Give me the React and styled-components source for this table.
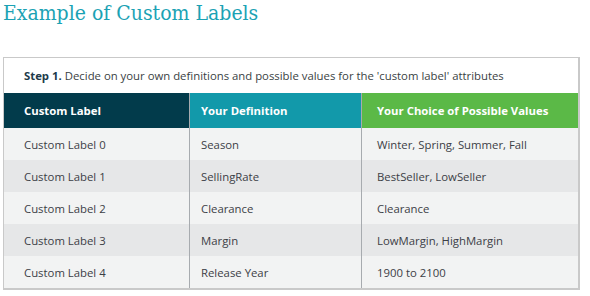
import styled, { createGlobalStyle } from "styled-components";

const rows = [
  { label: "Custom Label 0", def: "Season", values: "Winter, Spring, Summer, Fall" },
  { label: "Custom Label 1", def: "SellingRate", values: "BestSeller, LowSeller" },
  { label: "Custom Label 2", def: "Clearance", values: "Clearance" },
  { label: "Custom Label 3", def: "Margin", values: "LowMargin, HighMargin" },
  { label: "Custom Label 4", def: "Release Year", values: "1900 to 2100" },
];

const GlobalStyle = createGlobalStyle`
  body {
    margin: 0;
    background: #ffffff;
    font-family: "Open Sans", "Liberation Sans", sans-serif;
  }
`;

const Page = styled.div`
  width: 590px;
  height: 296px;
  padding: 0 0 0 3px;
  box-sizing: border-box;
  overflow: hidden;
`;

const Title = styled.h1`
  margin: 0;
  height: 57px;
  padding-top: 1px;
  box-sizing: border-box;
  font-family: "DejaVu Serif Condensed", "DejaVu Serif", "Liberation Serif", serif;
  font-stretch: condensed;
  font-size: 21px;
  font-weight: normal;
  color: #1ba2b4;
`;

const Table = styled.div`
  width: 577px;
  box-sizing: border-box;
  border: 1px solid #c9c9c9;
  border-right-width: 2px;
  border-bottom-width: 2px;
`;

const Step = styled.div`
  height: 35px;
  display: flex;
  align-items: center;
  padding-left: 20px;
  font-size: 11.35px;
  color: #3a3f44;

  b {
    color: #1d3a4a;
    margin-right: 3px;
  }
`;

const Row = styled.div`
  display: grid;
  grid-template-columns: 185px 172px 1fr;
  height: ${(p) => p.$h}px;
  background: ${(p) => p.$bg};
`;

const Cell = styled.div`
  display: flex;
  align-items: center;
  padding-left: ${(p) => p.$pad}px;
  font-size: 11.35px;
  color: #3c4046;
  border-left: ${(p) => (p.$first ? "none" : "1.5px solid #a7abaf")};
`;

const Head = styled(Cell)`
  background: ${(p) => p.$bg};
  color: #ffffff;
  font-weight: 700;
`;

const pads = [20, 11, 15];

export default function App() {
  return (
    <Page>
      <GlobalStyle />
      <Title>Example of Custom Labels</Title>
      <Table>
        <Step>
          <b>Step 1.</b> Decide on your own definitions and possible values for the 'custom label' attributes
        </Step>
        <Row $h={35}>
          <Head $first $pad={pads[0]} $bg="#023b4b">Custom Label</Head>
          <Head $pad={pads[1]} $bg="#1299aa">Your Definition</Head>
          <Head $pad={pads[2]} $bg="#5bb947">Your Choice of Possible Values</Head>
        </Row>
        {rows.map((r, i) => (
          <Row key={r.label} $h={32} $bg={i % 2 === 0 ? "#f2f3f3" : "#e6e7e8"}>
            <Cell $first $pad={pads[0]}>{r.label}</Cell>
            <Cell $pad={pads[1]}>{r.def}</Cell>
            <Cell $pad={pads[2]}>{r.values}</Cell>
          </Row>
        ))}
      </Table>
    </Page>
  );
}
